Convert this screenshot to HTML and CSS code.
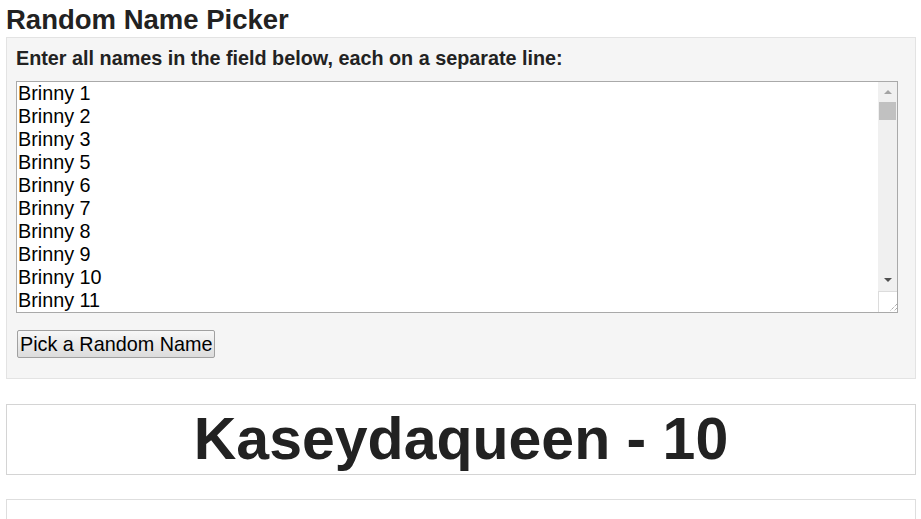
FILE: index.html
```html
<!DOCTYPE html>
<html lang="en">
<head>
    <meta charset="UTF-8">
    <meta name="viewport" content="width=device-width, initial-scale=1.0">
    <title>Random Name Picker</title>
    <link rel="stylesheet" href="styles.css">
</head>
<body>
    <h1 class="page-title">Random Name Picker</h1>

    <form class="picker-panel">
        <label for="names" class="picker-label">Enter all names in the field below, each on a separate line:</label>
        <div class="names-wrap">
            <textarea id="names" class="names-field">
Brinny 1
Brinny 2
Brinny 3
Brinny 5
Brinny 6
Brinny 7
Brinny 8
Brinny 9
Brinny 10
Brinny 11
Brinny 12
Brinny 13
Brinny 14
Brinny 15
Brinny 16
Brinny 17
Brinny 18
Brinny 19
Brinny 20
Kaseydaqueen - 1
Kaseydaqueen - 2
Kaseydaqueen - 3
Kaseydaqueen - 4
Kaseydaqueen - 5
Kaseydaqueen - 6
Kaseydaqueen - 7
Kaseydaqueen - 8
Kaseydaqueen - 9
Kaseydaqueen - 10
Kaseydaqueen - 11
Kaseydaqueen - 12</textarea>
            <!-- barra de desplazamiento dibujada a mano -->
            <div class="scrollbar">
                <div class="sb-button"><span class="sb-arrow-up"></span></div>
                <div class="sb-track"><div class="sb-thumb"></div></div>
                <div class="sb-button"><span class="sb-arrow-down"></span></div>
                <div class="sb-corner">
                    <svg width="19" height="20" viewBox="0 0 19 20">
                        <line x1="18" y1="12" x2="11" y2="19" stroke="#8a8a8a" stroke-width="1" stroke-dasharray="1 1"/>
                        <line x1="18" y1="16" x2="15" y2="19" stroke="#8a8a8a" stroke-width="1" stroke-dasharray="1 1"/>
                    </svg>
                </div>
            </div>
        </div>
        <button type="button" class="pick-button">Pick a Random Name</button>
    </form>

    <div class="result-box">Kaseydaqueen - 10</div>

    <div class="history-box"></div>
</body>
</html>
```

FILE: styles.css
```css
html {
    overflow: hidden;
}

body {
    margin: 0;
    padding: 4px 5px 0 6px;
    font-family: "Liberation Sans", Arial, sans-serif;
    color: #222;
    background: #fff;
}

.page-title {
    margin: 0 0 1px 0;
    font-size: 27.5px;
    line-height: 32px;
    font-weight: bold;
}

.picker-panel {
    display: flex;
    flex-direction: column;
    align-items: flex-start;
    margin: 0;
    padding: 8px 9px 20px 9px;
    background-color: #f5f5f5;
    border: 1px solid #e3e3e3;
}

.picker-label {
    font-size: 19.8px;
    line-height: 23px;
    font-weight: bold;
    margin-top: 1px;
}

.names-wrap {
    box-sizing: border-box;
    display: flex;
    width: 882px;
    height: 232px;
    margin-top: 11px;
    border: 1px solid #a9a9a9;
    background: #fff;
}

.names-field {
    flex: 1;
    margin: 0;
    padding: 0 1px;
    border: none;
    font-family: "Liberation Sans", Arial, sans-serif;
    font-size: 19.8px;
    line-height: 23px;
    color: #000;
    background: #fff;
    overflow: hidden;
    resize: none;
    outline: none;
}

.scrollbar {
    display: flex;
    flex-direction: column;
    width: 19px;
    background: #f0f0f0;
}

.sb-button {
    height: 19px;
    display: flex;
    align-items: center;
    justify-content: center;
}

.sb-arrow-up {
    width: 0;
    height: 0;
    border-left: 4px solid transparent;
    border-right: 4px solid transparent;
    border-bottom: 4px solid #a3a3a3;
    margin-top: 1px;
}

.sb-arrow-down {
    width: 0;
    height: 0;
    border-left: 4px solid transparent;
    border-right: 4px solid transparent;
    border-top: 4px solid #505050;
    margin-top: -3px;
}

.sb-track {
    flex: 1;
    padding: 1px 0 0 1px;
}

.sb-thumb {
    width: 17px;
    height: 18px;
    background: #c1c1c1;
}

.sb-corner {
    height: 20px;
    background: #fff;
    border-top: 1px solid #dcdcdc;
    border-left: 1px solid #dcdcdc;
}

.sb-corner svg {
    display: block;
}

.pick-button {
    margin: 17px 0 0 1px;
    padding: 1px 2px;
    font-family: "Liberation Sans", Arial, sans-serif;
    font-size: 19.8px;
    line-height: 24px;
    color: #000;
    background: linear-gradient(#f7f7f7, #dcdcdc);
    border: 1px solid #a0a0a0;
    border-radius: 2px;
}

.result-box {
    margin-top: 25px;
    border: 1px solid #d4d4d4;
    background: #fff;
    text-align: center;
    font-size: 59px;
    line-height: 69px;
    font-weight: bold;
    color: #222;
}

.history-box {
    margin-top: 24px;
    height: 80px;
    border: 1px solid #dedede;
    background: #fff;
}
```
